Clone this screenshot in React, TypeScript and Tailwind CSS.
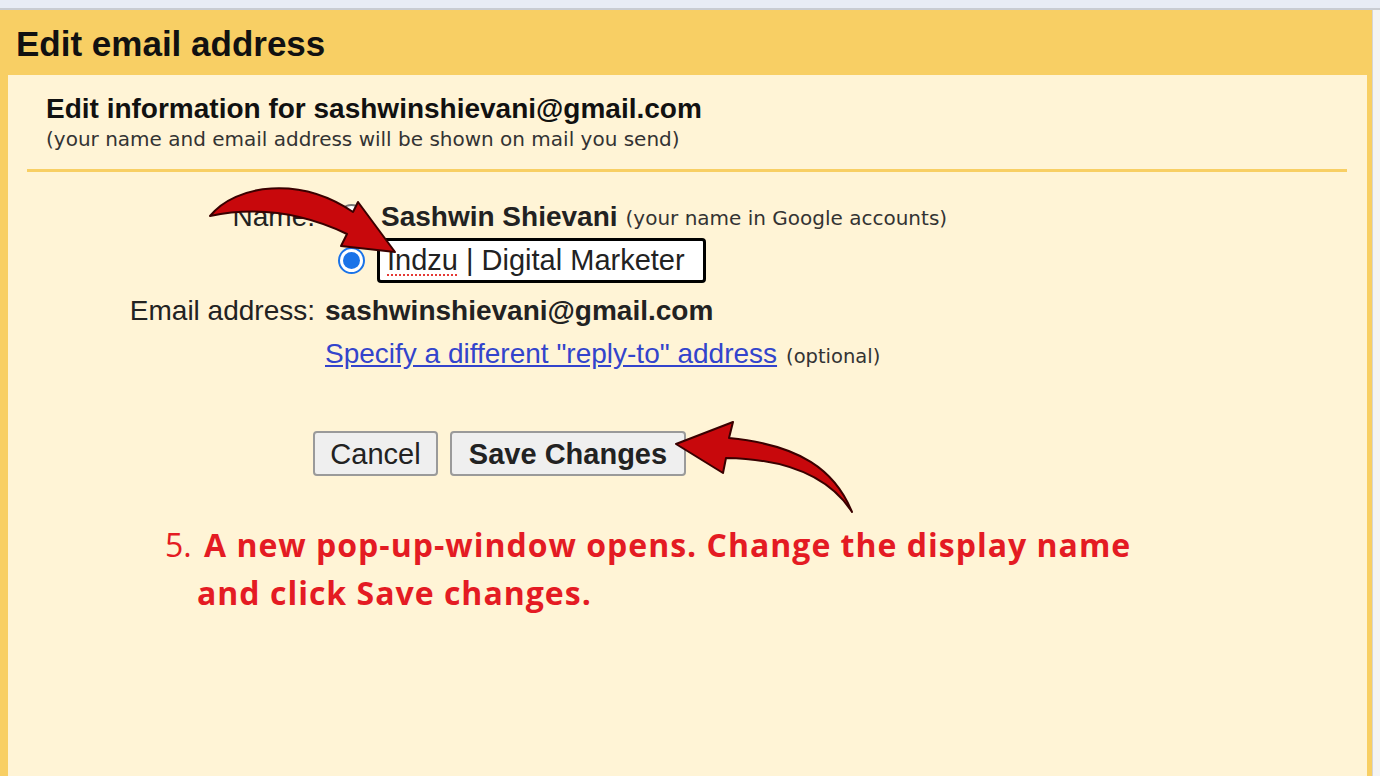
import React from "react";

function Arrows() {
  return (
    <svg className="absolute left-0 top-0 pointer-events-none" width="1380" height="776" viewBox="0 0 1380 776">
      <path
        d="M210,216 C236,184 300,176 353,212 L358,202 L395,252 L341,246 L347,234 C305,214 258,206 210,216 Z"
        fill="#c8080c"
        stroke="#3a0000"
        strokeWidth="2"
        strokeLinejoin="round"
      />
      <path
        d="M852,512 C835,470 800,445 729,438 L733,422 L676,444 L723,473 L726,458 C790,459 830,478 852,512 Z"
        fill="#c8080c"
        stroke="#3a0000"
        strokeWidth="2"
        strokeLinejoin="round"
      />
    </svg>
  );
}

const verdana = { fontFamily: '"DejaVu Sans", Verdana, sans-serif' };

export default function App() {
  return (
    <div className="relative w-[1380px] h-[776px] overflow-hidden bg-[#f3f3f3]" style={{ fontFamily: '"Liberation Sans", Arial, sans-serif' }}>
      <div className="h-[10px] bg-[#e8ecf5] border-b-2 border-[#c9ccd2]" />
      <div className="flex h-[766px]">
        <div className="w-[1372px] bg-[#f8cf64] flex flex-col">
          <div className="h-[65px] pl-[16px] pt-[4px] flex items-center">
            <h1 className="text-[35px] font-bold text-[#111]">Edit email address</h1>
          </div>
          <div className="flex-1 ml-[8px] mr-[5px] bg-[#fff4d6] pt-[18px]">
            <div className="pl-[38px]">
              <div className="text-[28px] font-bold text-[#111] leading-[32px]">Edit information for sashwinshievani@gmail.com</div>
              <div className="text-[20px] text-[#333] leading-[22px] mt-[3px]" style={verdana}>(your name and email address will be shown on mail you send)</div>
            </div>
            <div className="ml-[19px] mr-[20px] mt-[19px] h-[3px] bg-[#f8cf64]" />
            <div className="mt-[28px] grid grid-cols-[307px_1fr] gap-x-[10px] text-[#222]">
              <div className="text-right text-[28px] leading-[34px]">Name:</div>
              <div className="flex flex-col">
                <div className="flex items-center h-[34px]">
                  <span className="w-[27px] h-[27px] rounded-full border-2 border-[#777] bg-white ml-[13px] shrink-0" />
                  <span className="ml-[16px] text-[28px] font-bold text-[#222]">Sashwin Shievani</span>
                  <span className="ml-[8px] text-[20px] text-[#333] mt-[2px]" style={verdana}>(your name in Google accounts)</span>
                </div>
                <div className="flex items-center mt-[4px] h-[45px]">
                  <span className="w-[27px] h-[27px] rounded-full border-2 border-[#1a73e8] bg-white ml-[13px] flex items-center justify-center shrink-0">
                    <span className="w-[17px] h-[17px] rounded-full bg-[#1a73e8]" />
                  </span>
                  <div className="ml-[12px] h-[45px] w-[329px] border-[3px] border-black rounded-[4px] bg-white flex items-center pl-[7px] text-[29px] text-[#222]">
                    <span className="underline decoration-dotted decoration-[#e53935] decoration-[2px] underline-offset-[5px]">Indzu</span>
                    <span>&nbsp;| Digital Marketer</span>
                  </div>
                </div>
              </div>
              <div className="text-right text-[28px] leading-[34px] mt-[11px]">Email address:</div>
              <div className="text-[28px] leading-[34px] font-bold text-[#222] mt-[11px]">sashwinshievani@gmail.com</div>
              <div />
              <div className="mt-[9px] leading-[34px] flex items-baseline">
                <a className="text-[28px] text-[#3344cc] underline">Specify a different "reply-to" address</a>
                <span className="ml-[9px] text-[19.5px] text-[#333]" style={verdana}>(optional)</span>
              </div>
            </div>
            <div className="flex gap-[12px] pl-[305px] mt-[57px]">
              <button className="h-[45px] w-[125px] bg-[#efefef] border-2 border-[#9a9a9a] rounded-[4px] text-[29px] text-[#222]">Cancel</button>
              <button className="h-[45px] w-[236px] bg-[#efefef] border-2 border-[#9a9a9a] rounded-[4px] text-[29px] font-bold text-[#222]">Save Changes</button>
            </div>
            <div className="mt-[45px] pl-[157px] text-[#e41b23] text-[32px] leading-[48px]" style={{ fontFamily: '"Open Sans", "Noto Sans", sans-serif' }}>
              <div><span className="font-normal">5.</span> <span className="font-bold tracking-[1px] ml-[4px]">A new pop-up-window opens. Change the display name</span></div>
              <div className="pl-[32px] font-bold tracking-[1px]">and click Save changes.</div>
            </div>
          </div>
        </div>
        <div className="flex-1 bg-[#f4f4f4] border-l border-[#d5d5d5]" />
      </div>
      <Arrows />
    </div>
  );
}
